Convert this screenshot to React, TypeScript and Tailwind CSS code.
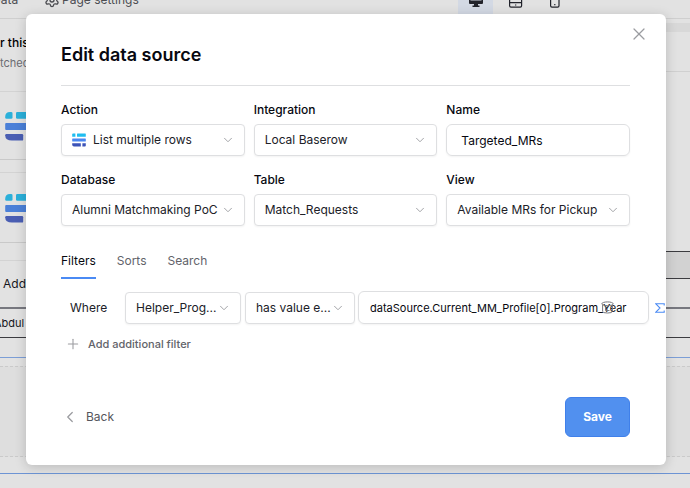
import React, { useState } from 'react';
import clsx from 'clsx';
import { ChevronDown, ChevronLeft, Plus, Settings, X } from 'lucide-react';

interface SelectProps {
  id: string;
  label?: string;
  value: string;
  icon?: React.ReactNode;
  className?: string;
}

function RowsIcon({ className }: { className?: string }) {
  return (
    <svg viewBox="0 0 14 14" className={className} aria-hidden="true">
      <path d="M1 .5H3.4V3.7H.2V1.5Q.2.5 1 .5Z" fill="#1fbdf0" />
      <rect x="5" y=".5" width="8.8" height="3.2" rx=".5" fill="#1fbdf0" />
      <rect x=".2" y="5.4" width="13.6" height="3.2" rx=".5" fill="#4a86f0" />
      <path d="M.2 10.3H8.8V13.5H2Q.2 13.5.2 11.8Z" fill="#3c53b8" />
      <path d="M10.4 10.3H13.8V12.6Q13.8 13.5 12.9 13.5H10.4Z" fill="#3c53b8" />
    </svg>
  );
}

function DataSourceLogo() {
  return (
    <svg viewBox="0 0 42 30" className="h-[30px] w-[42px] shrink-0" aria-hidden="true">
      <path d="M5 1H6.2Q7.5 1 7.5 2.3V6.4Q7.5 7.7 6.2 7.7H1.5Q.2 7.7.2 6.4V5.8Q.2 1 5 1Z" fill="#2bb0da" />
      <rect x="11" y="1" width="30" height="6.7" rx="1.3" fill="#2bb0da" />
      <rect x=".2" y="12" width="41" height="7" rx="1" fill="#4b80d8" />
      <path d="M1.3 23H17Q18.2 23 18.2 24.3V28.4Q18.2 29.6 17 29.6H7Q.2 29.6.2 24.2Q.2 23 1.3 23Z" fill="#4a5eb3" />
    </svg>
  );
}

function Select({ id, label, value, icon, className }: SelectProps) {
  return (
    <div className={className}>
      {label && (
        <label htmlFor={id} className="mb-1.5 block font-medium text-[#070810]">
          {label}
        </label>
      )}
      <div className="relative">
        {icon && <span className="absolute top-[9px] left-[11px]">{icon}</span>}
        <select
          id={id}
          aria-label={label ? undefined : value}
          defaultValue={value}
          className={clsx(
            'block h-8 w-full appearance-none rounded border border-[#dedfe1] bg-white pr-5 text-[#202128] shadow-xs',
            icon ? 'pl-[31px]' : 'pl-2.5',
          )}
        >
          <option>{value}</option>
        </select>
        <ChevronDown size={14} strokeWidth={1.6} className="pointer-events-none absolute top-[9px] right-2.5 text-[#9c9da1]" />
      </div>
    </div>
  );
}

// Page editor that stays visible around the modal
function EditorBackdrop() {
  return (
    <div className="flow-root min-h-screen bg-[#e2e2e2] text-[#16171c]" aria-hidden="true">
      <div className="-mt-[18px] flex h-[37px] items-center border-b border-[#cfcfcf] text-[#4c4d52]">
        <div className="-ml-2 w-[52px]">Data</div>
        <Settings size={16} strokeWidth={2} />
        <span className="ml-0.5">Page settings</span>
        <div className="ml-auto flex h-full pr-[118px] text-[#22232b]">
          <span className="flex w-[35px] items-center justify-center bg-[#d3d9e4]">
            <svg width="14" height="14" viewBox="0 0 14 14" fill="currentColor">
              <path d="M1 0H13Q14 0 14 1V10Q14 11 13 11H9V12.4H10.5V14H3.5V12.4H5V11H1Q0 11 0 10V1Q0 0 1 0ZM1.5 1.5V7.6H12.5V1.5Z" />
            </svg>
          </span>
          <span className="flex w-[45px] items-center justify-center">
            <svg width="14" height="16" viewBox="0 0 14 16" fill="none" stroke="currentColor" strokeWidth="1.2">
              <rect x=".6" y=".6" width="12" height="14.6" rx="1.4" />
              <path d="M.6 10.7H12.6M6 13H7.3" />
            </svg>
          </span>
          <span className="flex w-[34px] items-center justify-center">
            <svg width="10" height="16" viewBox="0 0 10 16" fill="none" stroke="currentColor" strokeWidth="1.2">
              <rect x=".6" y=".6" width="8.4" height="14.6" rx="1.4" />
              <path d="M4.2 12.6H5.4" />
            </svg>
          </span>
        </div>
      </div>

      <div className="flex h-[288px] justify-between">
        <div className="w-[60px] overflow-hidden whitespace-nowrap">
          <div className="h-[72px] pt-4">
            <p className="font-medium text-black">r this page</p>
            <p className="mt-1 text-[11px] text-[#6c6d72]">tched from</p>
          </div>
          <div className="flex h-[69px] items-center border-y border-[#d3d3d3] border-b-[#c9c9c9] pl-[5px]">
            <DataSourceLogo />
          </div>
          <div className="mt-3 flex h-[71px] items-center border-y border-[#d3d3d3] border-b-[#c9c9c9] pl-[5px]">
            <DataSourceLogo />
          </div>
          <div className="mt-[17px] border-t border-[#d3d3d3] pt-[15px] pl-[3px]">Add data</div>
        </div>
        <div className="w-[60px]">
          <div className="mt-1 h-[9px] bg-[#d8d8d8]" />
          <div className="mt-[39px] border-t border-[#d0d0d0]" />
          <div className="mt-[179px] h-7 border-y border-[#3c3c40] bg-[#d2d2d2]" />
        </div>
      </div>

      <div className="h-[31px] border-t-2 border-b border-t-[#77787f] border-b-[#3c3c40]">
        <p className="-ml-1.5 pt-1.5 text-[11px]">Abdul</p>
      </div>
      <div className="h-5 border-b border-[#7c9ed6]" />
      <div className="mt-2 h-[91px] border-y border-dashed border-[#cacaca] bg-[#dedede]" />
      <div className="mt-4 border-t border-[#6d94d4]" />
    </div>
  );
}

const tabs = ['Filters', 'Sorts', 'Search'];

export default function App() {
  const [activeTab, setActiveTab] = useState('Filters');
  const [name, setName] = useState('Targeted_MRs');
  const [formula, setFormula] = useState('dataSource.Current_MM_Profile[0].Program_Year');

  return (
    <div className="relative h-screen overflow-hidden font-[Inter,sans-serif] text-[12px] leading-4">
      <EditorBackdrop />

      <div className="absolute inset-0 pt-[14px] pr-6 pl-[26px]">
        <div
          role="dialog"
          aria-labelledby="dialog-title"
          className="relative overflow-hidden rounded-md bg-white pt-[29px] pr-9 pb-7 pl-[35px] shadow-[0_2px_12px_rgba(0,0,0,0.18)]"
        >
          <button className="absolute top-2.5 right-[17px] text-[#9b9ca0]" title="Close">
            <X size={20} strokeWidth={1.5} />
          </button>

          <h1 id="dialog-title" className="border-b border-[#dedfe1] pb-[18px] text-[18px] leading-6 font-semibold text-[#070810]">
            Edit data source
          </h1>

          <div className="mt-4 grid grid-cols-3 gap-x-[9px] gap-y-4">
            <Select id="action" label="Action" value="List multiple rows" icon={<RowsIcon className="size-3.5" />} />
            <Select id="integration" label="Integration" value="Local Baserow" />
            <div>
              <label htmlFor="name" className="mb-1.5 block font-medium text-[#070810]">
                Name
              </label>
              <input
                id="name"
                value={name}
                onChange={(e) => setName(e.target.value)}
                className="block h-8 w-full rounded-md border border-[#dedfe1] px-3.5 text-[#070810] shadow-xs"
              />
            </div>
            <Select id="database" label="Database" value="Alumni Matchmaking PoC" />
            <Select id="table" label="Table" value="Match_Requests" />
            <Select id="view" label="View" value="Available MRs for Pickup" />
          </div>

          {/* Tabs */}
          <div className="mt-[27px] flex gap-[21px]">
            {tabs.map((tab) => (
              <button
                key={tab}
                onClick={() => setActiveTab(tab)}
                className={clsx(
                  'border-b-2 pb-2',
                  activeTab === tab ? 'border-[#4a8af4] text-[#070810]' : 'border-transparent text-[#62636a]',
                )}
              >
                {tab}
              </button>
            ))}
          </div>

          {/* Filter row */}
          <div className="mt-3 -mr-[35px] flex items-center pl-[9px]">
            <span className="w-[55px] text-[#202128]">Where</span>
            <Select id="field" value="Helper_Prog..." className="w-[116px]" />
            <Select id="operator" value="has value e..." className="ml-1 w-[110px]" />
            <div className="relative ml-[3px] flex-1">
              <input
                aria-label="Filter value"
                value={formula}
                onChange={(e) => setFormula(e.target.value)}
                className="block h-[33px] w-full rounded-md border border-[#dedfe1] px-[11px] text-[11px] text-[#070810] shadow-xs"
              />
              <svg
                viewBox="0 0 13 13"
                className="absolute top-2.5 right-[35px] size-[13px]"
                fill="none"
                stroke="#77787d"
                aria-hidden="true"
              >
                <ellipse cx="6.5" cy="2.8" rx="5.7" ry="1.9" />
                <path d="M1.6 4V10.4Q1.6 12 6.5 12T11.4 10.4V4M4.5 5.5V9.5H8.5" />
              </svg>
            </div>
            <button className="ml-1.5 text-[#4a8af4]" title="Formula">
              <svg width="10" height="10" viewBox="0 0 10 10" fill="none" stroke="currentColor" strokeWidth="1.1">
                <path d="M9.2 2.6V.8H.8L5 5L.8 9.2H9.2V7.4" />
              </svg>
            </button>
          </div>

          <button className="mt-3 ml-1 flex items-center text-[11px] leading-4 font-medium text-[#62636a]">
            <Plus size={16} strokeWidth={1.6} className="mr-[7px] text-[#9b9ca0]" />
            Add additional filter
          </button>

          <div className="mt-[45px] flex items-center justify-between">
            <button className="flex items-center text-[#55565c]">
              <ChevronLeft size={18} strokeWidth={1.7} className="mr-[7px] text-[#9b9ca0]" />
              Back
            </button>
            <button className="h-10 w-[65px] rounded-md border border-[#4080ea] bg-[#5190ef] font-bold text-white">Save</button>
          </div>
        </div>
      </div>
    </div>
  );
}
